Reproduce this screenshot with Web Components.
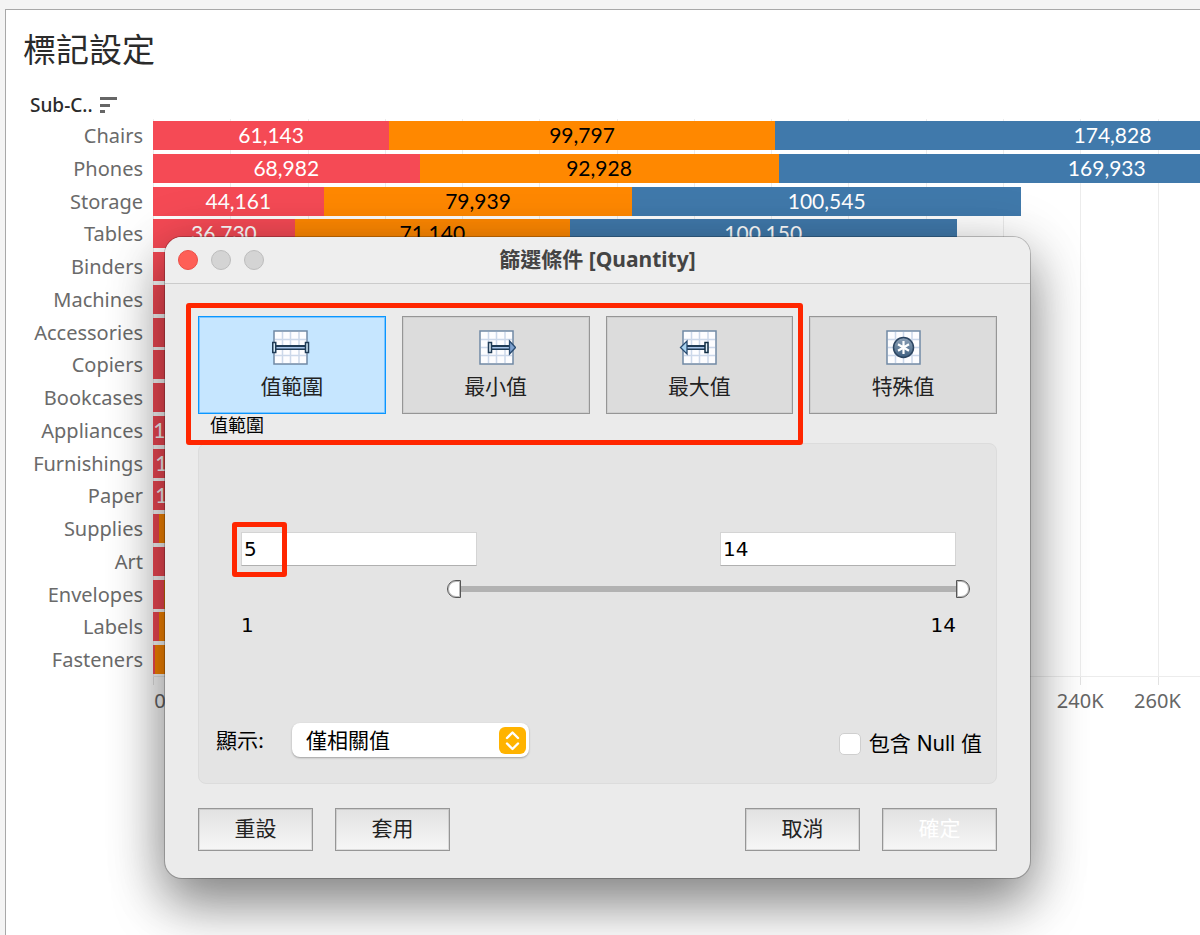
<!DOCTYPE html>
<html lang="zh-Hant">
<head>
<meta charset="utf-8">
<title>標記設定</title>
<style>
  html, body { height: 100%; }
  body {
    margin: 0;
    background: #f4f4f4;
    color: #000;
    font-family: "Noto Sans", "Noto Sans CJK TC", sans-serif;
    overflow: hidden;
  }
</style>
</head>
<body>
<work-sheet>
  <span slot="title">標記設定</span>
  <bar-chart>
    <span slot="header">Sub-C..</span>
    <bar-row name="Chairs" values="61143,99797,174828"></bar-row>
    <bar-row name="Phones" values="68982,92928,169933"></bar-row>
    <bar-row name="Storage" values="44161,79939,100545"></bar-row>
    <bar-row name="Tables" values="36730,71140,100150"></bar-row>
    <bar-row name="Binders" values="36000"></bar-row>
    <bar-row name="Machines" values="33000"></bar-row>
    <bar-row name="Accessories" values="30000"></bar-row>
    <bar-row name="Copiers" values="28000"></bar-row>
    <bar-row name="Bookcases" values="26000"></bar-row>
    <bar-row name="Appliances" values="17100"></bar-row>
    <bar-row name="Furnishings" values="18100"></bar-row>
    <bar-row name="Paper" values="18100"></bar-row>
    <bar-row name="Supplies" values="1600,13000"></bar-row>
    <bar-row name="Art" values="9000"></bar-row>
    <bar-row name="Envelopes" values="2900,9000"></bar-row>
    <bar-row name="Labels" values="1600,8000"></bar-row>
    <bar-row name="Fasteners" values="600,6000"></bar-row>
  </bar-chart>
  <filter-dialog slot="dialog">
    <span slot="title">篩選條件 [Quantity]</span>
    <mode-tabs slot="tabs">
      <mode-tab icon="range" selected>值範圍</mode-tab>
      <mode-tab icon="min">最小值</mode-tab>
      <mode-tab icon="max">最大值</mode-tab>
      <mode-tab icon="special">特殊值</mode-tab>
    </mode-tabs>
    <range-panel min="1" max="14" low="5" high="14"></range-panel>
    <push-button slot="left">重設</push-button>
    <push-button slot="left">套用</push-button>
    <push-button slot="right">取消</push-button>
    <push-button slot="right" primary>確定</push-button>
  </filter-dialog>
</work-sheet>

<script>
const AXIS_MAX = 271000;
const AXIS_STEP = 20000;

class BaseElement extends HTMLElement {
  constructor() {
    super();
    this.attachShadow({ mode: 'open' });
  }

  connectedCallback() {
    this.shadowRoot.innerHTML = this.template();
    this.ready();
  }

  template() { return ''; }
  ready() {}
}

// Sheet frame with the title on top, the dialog floats over it
class WorkSheet extends BaseElement {
  template() {
    return `
      <style>
        :host {
          display: block;
          position: relative;
          box-sizing: border-box;
          min-height: 100vh;
          padding: 9px 0 0 5px;
          overflow: hidden;
        }
        main {
          box-sizing: border-box;
          min-height: 100vh;
          padding-top: 16px;
          border-left: 1px solid #a8a8a8;
          border-top: 1px solid #a8a8a8;
          background: #fff;
        }
        h1 {
          margin: 0 0 19px;
          padding-left: 17px;
          font-size: 33px;
          font-weight: 400;
          line-height: 48px;
          color: #2b2b2b;
        }
      </style>
      <main>
        <h1><slot name="title"></slot></h1>
        <slot></slot>
      </main>
      <slot name="dialog"></slot>
    `;
  }
}

class BarChart extends BaseElement {
  template() {
    const ticks = [];
    for (let v = 0; v <= AXIS_MAX; v += AXIS_STEP) {
      ticks.push(`<span>${v ? v / 1000 + 'K' : '0'}</span>`);
    }
    return `
      <style>
        :host { display: block; }
        header {
          display: flex;
          align-items: center;
          gap: 7px;
          height: 24px;
          padding: 0 0 2px 24px;
          font-size: 19px;
          font-weight: 500;
          color: #2b2b2b;
        }
        header svg { width: 17px; height: 17px; }
        .rows {
          display: grid;
          grid-template-rows: repeat(17, 1fr);
          height: 557px;
        }
        .axis {
          margin-left: 147px;
          border-top: 1px solid #ececec;
          overflow: hidden;
        }
        .marks {
          height: 8px;
          background: repeating-linear-gradient(to right, #e2e2e2 0 1px, transparent 1px calc(100% * ${AXIS_STEP / AXIS_MAX}));
        }
        .ticks {
          display: flex;
          margin-left: calc(100% * ${-AXIS_STEP / 2 / AXIS_MAX});
          margin-right: calc(100% * ${AXIS_STEP / 2 / AXIS_MAX});
          font-size: 20px;
          line-height: 32px;
          color: #666;
        }
        .ticks span {
          flex: 0 0 calc(100% * ${AXIS_STEP / AXIS_MAX});
          text-align: center;
        }
        .ticks span:first-child { text-indent: 14px; }
      </style>
      <header>
        <slot name="header"></slot>
        <svg viewBox="0 0 17 17" aria-hidden="true">
          <path d="M0 0h17v3H0zM0 7h10v3H0zM0 13h5v3H0z" fill="#666"/>
        </svg>
      </header>
      <div class="rows"><slot></slot></div>
      <div class="axis">
        <div class="marks"></div>
        <div class="ticks">${ticks.join('')}</div>
      </div>
    `;
  }
}

class BarRow extends BaseElement {
  template() {
    const values = this.getAttribute('values').split(',').map(Number);
    const bars = values.map((v, i) => `
      <span class="bar c${i}" style="width: calc(100% * ${v / AXIS_MAX})">${v > 14000 ? v.toLocaleString('en-US') : ''}</span>
    `).join('');
    return `
      <style>
        :host {
          display: grid;
          grid-template-columns: 147px minmax(0, 1fr);
          min-height: 0;
        }
        .name {
          padding: 1px 10px 0 0;
          text-align: right;
          font-size: 20px;
          line-height: 32px;
          color: #6a6a6a;
        }
        .bars {
          display: flex;
          box-sizing: border-box;
          padding: 2px 0;
          overflow: hidden;
          background: repeating-linear-gradient(to right, #ececec 0 1px, transparent 1px calc(100% * ${AXIS_STEP / AXIS_MAX}));
        }
        .bar {
          flex: none;
          text-align: center;
          font-family: Lato, "Noto Sans", sans-serif;
          font-size: 21px;
          line-height: 27px;
          color: #fff;
        }
        .c0 { background: #f54a55; }
        .c1 { background: #ff8800; color: #000; }
        .c2 { background: #4079ab; }
      </style>
      <span class="name">${this.getAttribute('name')}</span>
      <div class="bars">${bars}</div>
    `;
  }
}

class FilterDialog extends BaseElement {
  template() {
    return `
      <style>
        :host {
          position: absolute;
          top: 237px;
          left: 165px;
          right: 170px;
          border-radius: 17px;
          background: #ebebeb;
          box-shadow: 0 0 0 1px rgba(0, 0, 0, 0.22), 0 28px 52px rgba(0, 0, 0, 0.36), 0 10px 60px rgba(0, 0, 0, 0.24);
        }
        header {
          display: grid;
          grid-template-columns: 1fr auto 1fr;
          align-items: center;
          height: 46px;
          padding: 0 13px;
          border-bottom: 1px solid #cbcbcb;
          border-radius: 17px 17px 0 0;
          background: #eee;
        }
        .lights { display: flex; gap: 13px; }
        .lights button {
          width: 20px;
          height: 20px;
          padding: 0;
          border: 1px solid #bdbdbd;
          border-radius: 50%;
          background: #d4d4d4;
        }
        .lights .close { border-color: #ec4f47; background: #fe5f57; }
        h2 {
          margin: 0;
          padding-bottom: 2px;
          font-size: 21px;
          font-weight: 700;
          line-height: 28px;
          color: #444;
        }
        .body { padding: 32px 33px 27px; }
        footer {
          display: flex;
          justify-content: space-between;
          margin-top: 24px;
        }
        footer div { display: flex; gap: 22px; }
      </style>
      <header>
        <div class="lights">
          <button class="close" aria-label="關閉"></button>
          <button aria-label="最小化"></button>
          <button aria-label="縮放"></button>
        </div>
        <h2><slot name="title"></slot></h2>
      </header>
      <div class="body">
        <slot name="tabs"></slot>
        <slot></slot>
        <footer>
          <div><slot name="left"></slot></div>
          <div><slot name="right"></slot></div>
        </footer>
      </div>
    `;
  }
}

// Red outline drawn over what it points out
class MarkBox extends BaseElement {
  template() {
    return `
      <style>
        :host {
          position: absolute;
          box-sizing: border-box;
          border: 5px solid #ff2600;
          border-radius: 3px;
          pointer-events: none;
        }
      </style>
    `;
  }
}

class ModeTabs extends BaseElement {
  template() {
    return `
      <style>
        :host { display: block; position: relative; }
        .tabs {
          display: grid;
          grid-template-columns: repeat(4, 1fr);
          gap: 16px;
        }
        .caption {
          padding-left: 12px;
          font-size: 18px;
          line-height: 22px;
          height: 29px;
        }
        mark-box {
          top: -13px;
          bottom: -2px;
          left: -12px;
          right: calc(25% - 6px);
        }
      </style>
      <div class="tabs"><slot></slot></div>
      <div class="caption">值範圍</div>
      <mark-box></mark-box>
    `;
  }
}

const GRID = `
  <rect x="4" y="1" width="33" height="33" fill="#fdfdff" stroke="#7089a5" stroke-width="1.5"/>
  <path d="M12.500 2v31M20.500 2v31M29 2v31M5 9.500h31M5 17.500h31M5 25.500h31" stroke="#ccd8ea" stroke-width="1.5"/>
`;

const ICONS = {
  range: `<g transform="translate(-2)">${GRID}
    <path d="M6 15h29v5H6z" fill="#1f3b56"/><path d="M6 17h29v1.500H6z" fill="#a9c6ea"/>
    <rect x="2.750" y="12.500" width="3" height="10" fill="#d5ebf8" stroke="#1f3b56" stroke-width="1.500"/>
    <rect x="35.500" y="12.500" width="3" height="10" fill="#d5ebf8" stroke="#1f3b56" stroke-width="1.500"/></g>`,
  min: `${GRID}
    <path d="M15 15h18v5H15z" fill="#1f3b56"/><path d="M15 17h18v1.500H15z" fill="#a9c6ea"/>
    <rect x="12.500" y="12.500" width="3" height="10" fill="#e4f1fa" stroke="#1f3b56" stroke-width="1.500"/>
    <path d="M33.500 11v13l6-6.500z" fill="#7ea2d0" stroke="#294b70" stroke-width="1.300"/>`,
  max: `${GRID}
    <path d="M8 15h18v5H8z" fill="#1f3b56"/><path d="M8 17h18v1.500H8z" fill="#a9c6ea"/>
    <rect x="26" y="12.500" width="3" height="10" fill="#e4f1fa" stroke="#102d43" stroke-width="1.500"/>
    <path d="M8 11v13l-6.500-6.500z" fill="#a9d2ef" stroke="#294b70" stroke-width="1.300"/>`,
  special: `
    <defs><linearGradient id="ball" x2="0" y2="1"><stop stop-color="#8fa3b8"/><stop offset="1" stop-color="#3e5f80"/></linearGradient></defs>
    ${GRID}
    <circle cx="20.500" cy="17.500" r="10" fill="url(#ball)" stroke="#2c4561" stroke-width="1.500"/>
    <path d="M20.500 11v13M15 14.200l11 6.600M26 14.200l-11 6.600" stroke="#fff" stroke-width="2.200"/>`
};

class ModeTab extends BaseElement {
  template() {
    return `
      <style>
        :host { display: block; }
        button {
          display: flex;
          flex-direction: column;
          align-items: center;
          gap: 5px;
          box-sizing: border-box;
          width: 100%;
          height: 98px;
          padding: 13px 0 0;
          border: 1px solid #969696;
          background: #dcdcdc;
          box-shadow: inset 0 0 0 1px #cfcfcf;
          font: inherit;
          font-size: 21px;
          line-height: 30px;
          color: #222;
        }
        svg { width: 40px; height: 36px; }
        :host([selected]) button {
          border-color: #0a96ff;
          background: #c6e6ff;
          box-shadow: inset 0 0 0 1px #7cc5ff;
        }
      </style>
      <button>
        <svg viewBox="0 0 40 36" aria-hidden="true">${ICONS[this.getAttribute('icon')]}</svg>
        <span><slot></slot></span>
      </button>
    `;
  }
}

class RangePanel extends BaseElement {
  template() {
    const [min, max, low, high] = ['min', 'max', 'low', 'high'].map(n => Number(this.getAttribute(n)));
    return `
      <style>
        :host {
          display: block;
          box-sizing: border-box;
          padding: 88px 14px 24px 17px;
          border: 1px solid #dcdcdc;
          border-radius: 8px;
          background: #e4e4e4;
        }
        .range { margin: 0 26px 0 25px; font-family: "DejaVu Sans", sans-serif; font-size: 20px; }
        .fields, .limits { display: flex; justify-content: space-between; }
        .field { position: relative; width: 33%; }
        .field input {
          box-sizing: border-box;
          width: 100%;
          height: 34px;
          padding: 0 2px;
          border: 1px solid #d4d4d4;
          border-bottom-color: #b0b0b0;
          background: #fff;
          font: inherit;
          color: #000;
          display: block;
        }
        mark-box { top: -10px; left: -9px; width: 55px; height: 55px; }
        .slider {
          display: grid;
          align-items: center;
          height: 18px;
          margin: 14px 0 13px;
        }
        .slider > * { grid-area: 1 / 1; }
        .fill {
          height: 6px;
          margin-left: ${(low - min) / (max - min) * 100}%;
          margin-right: ${(max - high) / (max - min) * 100}%;
          background: #b2b2b2;
        }
        .slider input {
          -webkit-appearance: none;
          appearance: none;
          height: 18px;
          margin: 0;
          background: none;
          pointer-events: none;
        }
        .slider .low { margin-left: -14px; }
        .slider .high { margin-right: -14px; }
        .slider input::-webkit-slider-thumb {
          -webkit-appearance: none;
          box-sizing: border-box;
          width: 14px;
          height: 18px;
          border: 1px solid #555;
          background: #fff;
          box-shadow: inset 0 0 0 1px #bbb;
          pointer-events: auto;
        }
        .low::-webkit-slider-thumb { border-radius: 9px 0 0 9px; }
        .high::-webkit-slider-thumb { border-radius: 0 9px 9px 0; }
        .limits { line-height: 28px; }
        .options {
          display: flex;
          justify-content: space-between;
          margin-top: 84px;
          font-family: Inter, "Noto Sans CJK TC", sans-serif;
          font-size: 21px;
        }
        .show { display: flex; gap: 28px; line-height: 36px; }
        .select { position: relative; }
        select {
          -webkit-appearance: none;
          appearance: none;
          width: 237px;
          height: 34px;
          padding: 0 40px 0 14px;
          border: 0;
          border-radius: 8px;
          background: #fff;
          box-shadow: 0 1px 2px rgba(0, 0, 0, 0.3);
          font: inherit;
          color: #000;
        }
        .select svg {
          position: absolute;
          top: 4px;
          right: 3px;
          width: 27px;
          height: 27px;
          pointer-events: none;
        }
        .null {
          display: flex;
          align-items: center;
          gap: 8px;
          line-height: 30px;
          margin-top: 6px;
        }
        .null input {
          -webkit-appearance: none;
          appearance: none;
          width: 22px;
          height: 22px;
          margin: 0;
          border: 1px solid #cfcfcf;
          border-radius: 5px;
          background: #fff;
        }
      </style>
      <div class="range">
        <div class="fields">
          <div class="field">
            <input type="text" value="${low}" aria-label="最小值">
            <mark-box></mark-box>
          </div>
          <div class="field"><input type="text" value="${high}" aria-label="最大值"></div>
        </div>
        <div class="slider">
          <div class="fill"></div>
          <input class="low" type="range" min="${min}" max="${max}" value="${low}" aria-label="最小值">
          <input class="high" type="range" min="${min}" max="${max}" value="${high}" aria-label="最大值">
        </div>
        <div class="limits"><span>${min}</span><span>${max}</span></div>
      </div>
      <div class="options">
        <div class="show">
          <label for="show">顯示:</label>
          <div class="select">
            <select id="show"><option>僅相關值</option></select>
            <svg viewBox="0 0 27 27" aria-hidden="true">
              <rect width="27" height="27" rx="6" fill="#ffb300"/>
              <path d="M8 11l5.500-5.500L19 11M8 16.500l5.500 5.500 5.500-5.500" fill="none" stroke="#fff" stroke-width="2.400" stroke-linecap="round" stroke-linejoin="round"/>
            </svg>
          </div>
        </div>
        <label class="null"><input type="checkbox"><span>包含 Null 值</span></label>
      </div>
    `;
  }

  ready() {
    const root = this.shadowRoot;
    const fill = root.querySelector('.fill');
    const texts = root.querySelectorAll('.field input');
    const sliders = [root.querySelector('.low'), root.querySelector('.high')];
    const update = () => {
      const min = Number(sliders[0].min);
      const span = Number(sliders[0].max) - min;
      fill.style.marginLeft = (sliders[0].value - min) / span * 100 + '%';
      fill.style.marginRight = (min + span - sliders[1].value) / span * 100 + '%';
    };
    sliders.forEach((slider, i) => {
      slider.addEventListener('input', () => {
        texts[i].value = slider.value;
        update();
      });
      texts[i].addEventListener('change', () => {
        slider.value = texts[i].value;
        update();
      });
    });
  }
}

class PushButton extends BaseElement {
  template() {
    return `
      <style>
        :host { display: block; }
        button {
          box-sizing: border-box;
          min-width: 115px;
          height: 43px;
          padding: 0 16px 3px;
          border: 1px solid #969696;
          background: linear-gradient(#e2e2e2, #f6f6f6);
          box-shadow: inset 0 0 0 1px rgba(0, 0, 0, 0.1);
          font: inherit;
          font-size: 21px;
          line-height: 30px;
          color: #222;
        }
        :host([primary]) button { color: #fff; }
      </style>
      <button><slot></slot></button>
    `;
  }
}

customElements.define('work-sheet', WorkSheet);
customElements.define('bar-chart', BarChart);
customElements.define('bar-row', BarRow);
customElements.define('mark-box', MarkBox);
customElements.define('filter-dialog', FilterDialog);
customElements.define('mode-tabs', ModeTabs);
customElements.define('mode-tab', ModeTab);
customElements.define('range-panel', RangePanel);
customElements.define('push-button', PushButton);
</script>
</body>
</html>
